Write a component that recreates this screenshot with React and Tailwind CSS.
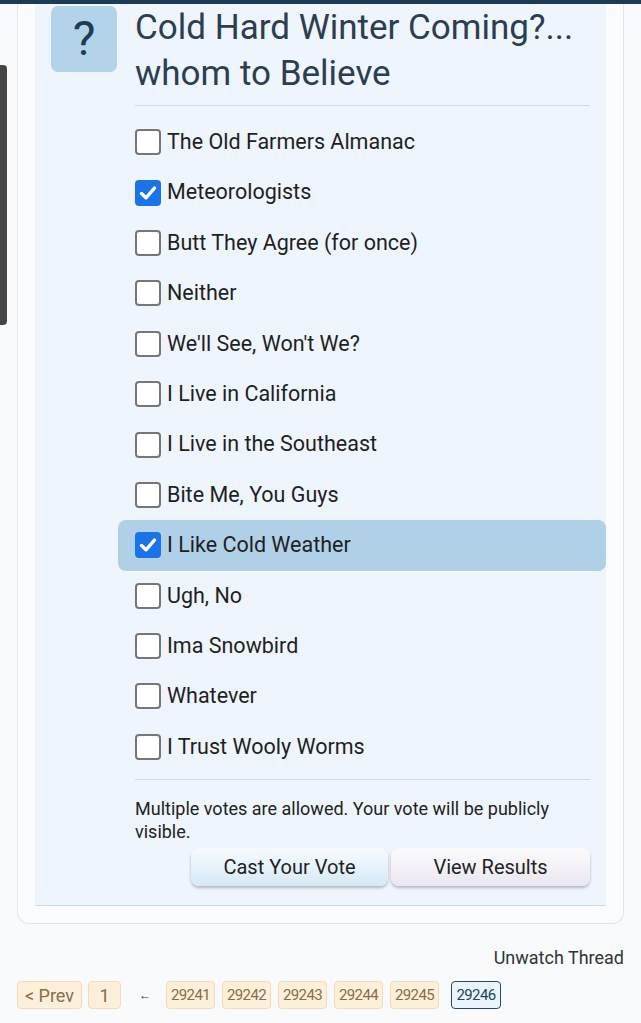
import { useState } from 'react'

const OPTIONS = [
  'The Old Farmers Almanac',
  'Meteorologists',
  'Butt They Agree (for once)',
  'Neither',
  "We'll See, Won't We?",
  'I Live in California',
  'I Live in the Southeast',
  'Bite Me, You Guys',
  'I Like Cold Weather',
  'Ugh, No',
  'Ima Snowbird',
  'Whatever',
  'I Trust Wooly Worms',
]

const PAGES = ['29241', '29242', '29243', '29244', '29245']

function Box({ checked }) {
  if (checked) {
    return (
      <span className="w-[26px] h-[26px] rounded-[4px] bg-[#1a73e8] flex items-center justify-center shrink-0">
        <svg width="20" height="20" viewBox="0 0 20 20">
          <path d="M3.5 10.5 L8 14.8 L16.5 5" fill="none" stroke="white" strokeWidth="3.4" strokeLinecap="round" strokeLinejoin="round" />
        </svg>
      </span>
    )
  }
  return <span className="w-[26px] h-[26px] rounded-[4px] border-2 border-[#767676] bg-white shrink-0" />
}

export default function App() {
  const [checked, setChecked] = useState([1, 8])

  const toggle = (i) => {
    setChecked(c => (c.includes(i) ? c.filter(x => x !== i) : [...c, i]))
  }

  return (
    <div className="relative min-h-[1023px] bg-[#f8fafc] text-[#222]" style={{ fontFamily: 'Roboto, "Noto Sans", sans-serif' }}>
      {/* Top bar */}
      <div className="h-[4px] bg-[#1d3b55]" />

      {/* scrollbar overlay */}
      <div className="absolute left-0 top-[65px] w-[7px] h-[260px] bg-[#454545] rounded-r-[4px]" />

      {/* Outer thread container */}
      <div className="mx-[17px] border-x border-b border-[#dde6ec] rounded-b-[12px] bg-[#fafcfe] px-[17px] pb-[17px]">
        <div className="bg-[#eef5fc] border-b border-[#c9dde8] pl-[16px] pb-[19px]">

          {/* Header */}
          <div className="flex items-start pt-[1px] pr-[16px]">
            <div className="w-[66px] h-[66px] mt-[1px] rounded-[7px] bg-[#b3d3ea] flex items-center justify-center text-[48px] font-normal text-[#1f3c56] leading-none shrink-0">?</div>
            <div className="ml-[18px] flex-1">
              <h1 className="text-[35px] leading-[46px] text-[#2c3e4f] font-normal">Cold Hard Winter Coming?... whom to Believe</h1>
              <div className="mt-[8px] border-t border-[#c7dde7]" />
            </div>
          </div>

          {/* Options */}
          <div className="ml-[67px] mt-[11px]">
            {OPTIONS.map((opt, i) => {
              const on = checked.includes(i)
              const hl = i === 8
              return (
                <label
                  key={opt}
                  onClick={() => toggle(i)}
                  className={`h-[50.4px] flex items-center px-[17px] rounded-[8px] cursor-pointer ${hl ? 'bg-[#b0d0e8]' : ''}`}
                >
                  <Box checked={on} />
                  <span className="ml-[6px] text-[21.5px] text-[#1f1f1f]">{opt}</span>
                </label>
              )
            })}
          </div>

          <div className="ml-[84px] mr-[16px] mt-[7px] border-t border-[#c7dde7]" />

          {/* Footer */}
          <div className="ml-[84px] mr-[16px] mt-[17px]">
            <p className="text-[18px] leading-[23px] text-[#222]">Multiple votes are allowed. Your vote will be publicly visible.</p>
            <div className="flex justify-end gap-[3px] mt-[5px]">
              <button className="w-[197px] h-[38px] rounded-[8px] bg-gradient-to-b from-[#f7fbfe] to-[#d6e9f6] text-[20px] text-[#222] shadow-[0_2px_3px_rgba(0,0,0,0.25)]">Cast Your Vote</button>
              <button className="w-[199px] h-[38px] rounded-[8px] bg-gradient-to-b from-[#fbfbfd] to-[#ebe7f0] text-[20px] text-[#222] shadow-[0_2px_3px_rgba(0,0,0,0.25)]">View Results</button>
            </div>
          </div>
        </div>
      </div>

      {/* Unwatch */}
      <div className="mx-[17px] mt-[23px] flex justify-end">
        <a className="text-[18px] leading-[22px] text-[#333]">Unwatch Thread</a>
      </div>

      {/* Pagination */}
      <div className="mx-[17px] mt-[12px] flex items-center text-[#8b6c4b]">
        <span className="h-[28px] w-[65px] flex items-center justify-center rounded-[4px] border border-[#f3dcb6] bg-[#fdf0db] text-[18px]">&lt; Prev</span>
        <span className="ml-[6px] h-[28px] w-[33px] flex items-center justify-center rounded-[4px] border border-[#f3dcb6] bg-[#fdf0db] text-[18px]">1</span>
        <span className="ml-[18px] mr-[15px] text-[12px] text-[#333]">←</span>
        <div className="flex gap-[7px]">
          {PAGES.map(p => (
            <span key={p} className="h-[28px] w-[49px] flex items-center justify-center rounded-[4px] border border-[#f3dcb6] bg-[#fdf0db] text-[15px] tracking-[-0.04em]">{p}</span>
          ))}
        </div>
        <span className="ml-[12px] h-[28px] w-[50px] flex items-center justify-center rounded-[4px] border border-[#2b4a5f] bg-[#eaf4fb] text-[15px] tracking-[-0.04em] text-[#24455d]">29246</span>
      </div>
    </div>
  )
}
